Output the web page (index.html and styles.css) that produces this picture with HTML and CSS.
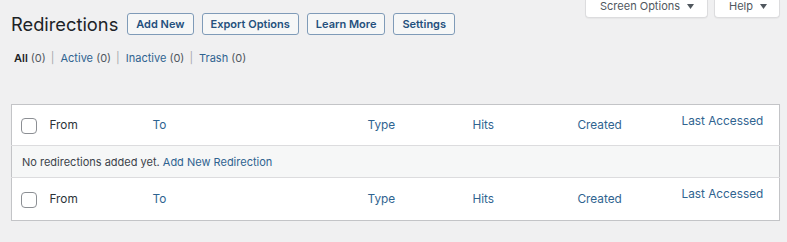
FILE: index.html
```html
<!DOCTYPE html>
<html>
<head>
    <title>Redirections</title>
    <link rel="stylesheet" href="styles.css">
</head>
<body>
    <div class="wrap">
        <div class="screen-meta-links">
            <button class="meta-tab tab-options">Screen Options
                <svg class="caret" width="7" height="5" viewBox="0 0 7 5"><path d="M0 0h7L3.5 5z" fill="#50575e"/></svg>
            </button>
            <button class="meta-tab tab-help">Help
                <svg class="caret" width="7" height="5" viewBox="0 0 7 5"><path d="M0 0h7L3.5 5z" fill="#50575e"/></svg>
            </button>
        </div>

        <div class="page-head">
            <h1>Redirections</h1>
            <a class="title-action" href="#">Add New</a>
            <a class="title-action" href="#">Export Options</a>
            <a class="title-action" href="#">Learn More</a>
            <a class="title-action" href="#">Settings</a>
        </div>

        <ul class="subsubsub">
            <li><a class="current" href="#">All</a> <span class="count">(0)</span><span class="sep">|</span></li>
            <li><a href="#">Active</a> <span class="count">(0)</span><span class="sep">|</span></li>
            <li><a href="#">Inactive</a> <span class="count">(0)</span><span class="sep">|</span></li>
            <li><a href="#">Trash</a> <span class="count">(0)</span></li>
        </ul>

        <table class="list-table">
            <colgroup>
                <col class="col-cb">
                <col class="col-from">
                <col class="col-to">
                <col class="col-type">
                <col class="col-hits">
                <col class="col-created">
                <col>
            </colgroup>
            <thead>
                <tr class="head-row">
                    <td class="check"><input type="checkbox"></td>
                    <th>From</th>
                    <th><a href="#">To</a></th>
                    <th><a href="#">Type</a></th>
                    <th><a href="#">Hits</a></th>
                    <th><a href="#">Created</a></th>
                    <th class="raised"><a href="#">Last Accessed</a></th>
                </tr>
            </thead>
            <tbody>
                <tr class="empty">
                    <td colspan="7">No redirections added yet. <a href="#">Add New Redirection</a></td>
                </tr>
            </tbody>
            <tfoot>
                <tr class="head-row foot-row">
                    <td class="check"><input type="checkbox"></td>
                    <th>From</th>
                    <th><a href="#">To</a></th>
                    <th><a href="#">Type</a></th>
                    <th><a href="#">Hits</a></th>
                    <th><a href="#">Created</a></th>
                    <th class="raised"><a href="#">Last Accessed</a></th>
                </tr>
            </tfoot>
        </table>
    </div>
</body>
</html>
```

FILE: styles.css
```css
body {
    margin: 0;
    background: #f0f0f1;
    color: #1d2327;
    font-family: Inter, "Noto Sans", sans-serif;
    font-size: 11px;
}
a {
    color: #2f6390;
    text-decoration: none;
}
.wrap {
    padding: 0 7px 0 11px;
}
.screen-meta-links {
    display: flex;
    justify-content: flex-end;
    gap: 6px;
    height: 18px;
    margin-bottom: -18px;
}
.meta-tab {
    height: 18px;
    padding: 0 0 5px 14px;
    background: #fff;
    border: 1px solid #dcdcde;
    border-top: none;
    border-radius: 0 0 4px 4px;
    box-shadow: 0 1px 1px rgba(0, 0, 0, 0.04);
    color: #50575e;
    font-family: inherit;
    font-size: 11px;
    line-height: 12px;
    display: flex;
    align-items: flex-end;
    gap: 7px;
}
.tab-options {
    width: 123px;
}
.tab-help {
    width: 66px;
}
.caret {
    margin-bottom: 3px;
}
.page-head {
    display: flex;
    align-items: center;
    gap: 8px;
    padding-top: 12px;
}
h1 {
    margin: 0 1px 0 0;
    font-size: 18.3px;
    font-weight: 400;
    line-height: 24px;
}
.title-action {
    padding: 3px 8px;
    border: 1px solid #7f9bb8;
    border-radius: 3px;
    background: #f6f7f7;
    color: #24507d;
    font-weight: 600;
    font-size: 11px;
    line-height: 14px;
}
.subsubsub {
    list-style: none;
    margin: 14px 0 0 3px;
    padding: 0;
    display: flex;
    color: #50575e;
    line-height: 16px;
}
.subsubsub .current {
    color: #1d2327;
    font-weight: 600;
}
.sep {
    color: #a7aaad;
    margin: 0 6px 0 5px;
}
.list-table {
    margin-top: 38px;
    width: 100%;
    table-layout: fixed;
    border-collapse: collapse;
    background: #fff;
    border: 1px solid #c3c4c7;
    box-shadow: 0 1px 1px rgba(0, 0, 0, 0.04);
}
.col-cb { width: 28px; }
.col-from { width: 103px; }
.col-to { width: 215px; }
.col-type { width: 105px; }
.col-hits { width: 105px; }
.col-created { width: 104px; }
.head-row {
    height: 41px;
}
.foot-row {
    height: 43px;
}
.list-table th {
    text-align: left;
    font-weight: 400;
    font-size: 11.8px;
    line-height: 16px;
    color: #2c3338;
    padding: 0 10px;
    vertical-align: middle;
}
.list-table th.raised {
    vertical-align: top;
    padding-top: 8px;
}
.list-table thead tr {
    border-bottom: 1px solid #dcdcde;
}
.list-table tfoot tr {
    border-top: 1px solid #dcdcde;
}
.check {
    padding: 0 0 0 9px;
    vertical-align: middle;
}
.check input {
    appearance: none;
    margin: 2px 0 0;
    width: 16px;
    height: 16px;
    border: 1px solid #8c8f94;
    border-radius: 4px;
    background: #fff;
    display: block;
}
.empty {
    height: 32px;
}
.empty td {
    background: #f6f7f7;
    padding: 0 10px;
    color: #3c434a;
}
```
